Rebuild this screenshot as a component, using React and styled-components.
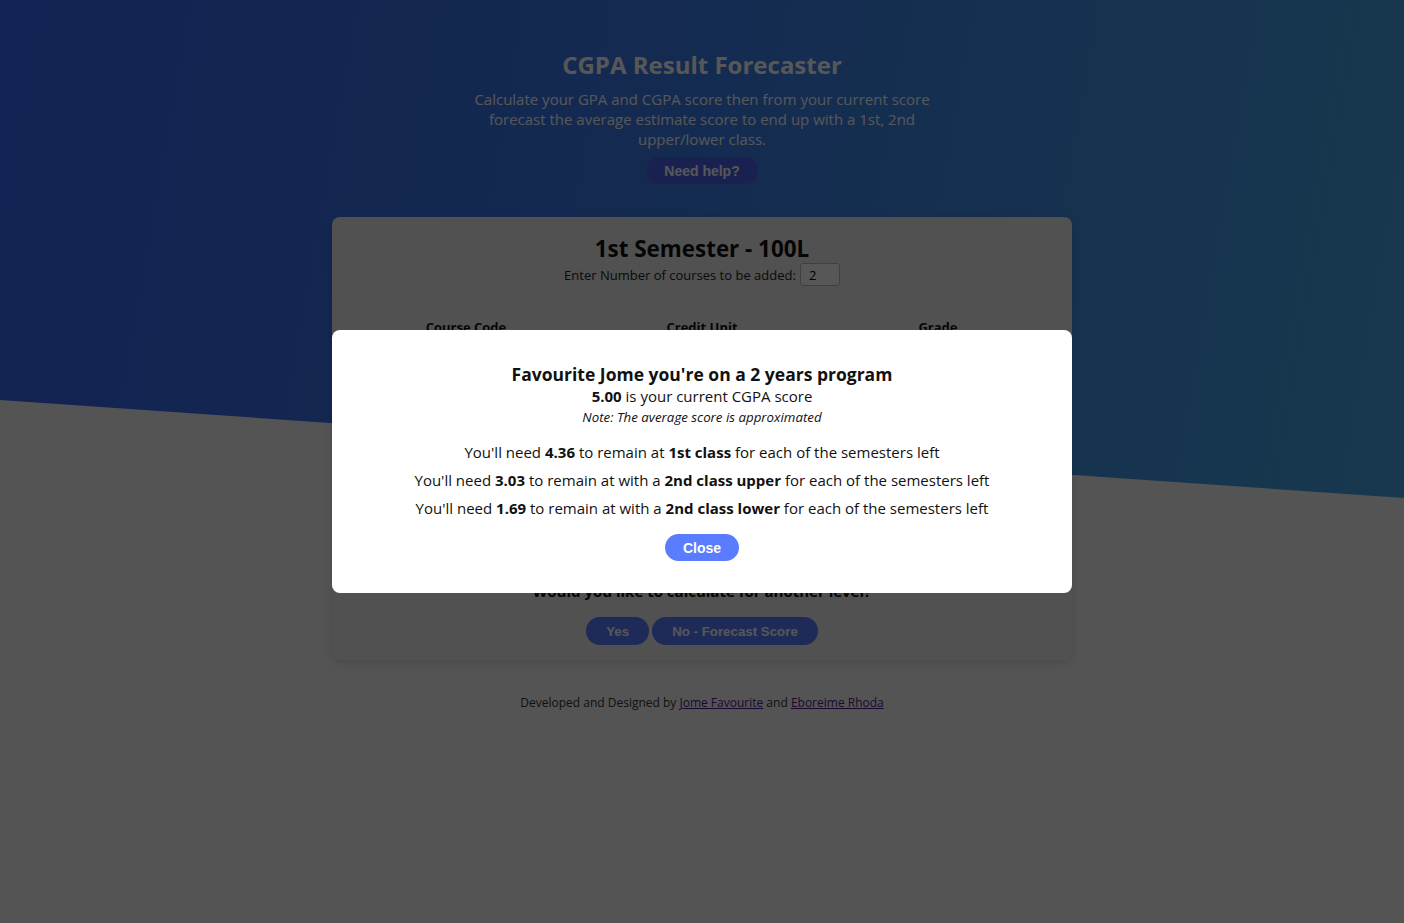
import React from "react";
import styled, { createGlobalStyle } from "styled-components";

const GlobalStyle = createGlobalStyle`
  html, body { margin: 0; padding: 0; }
  body {
    font-family: "Open Sans", "DejaVu Sans", sans-serif;
    background: #f6f6f6;
    color: #222;
  }
  * { box-sizing: border-box; }
`;

const Page = styled.div`
  position: relative;
  min-height: 100vh;
  background: #f6f6f6;
  overflow: hidden;
  &::before {
    content: "";
    position: absolute;
    left: 0;
    right: 0;
    top: 0;
    height: 498px;
    background: linear-gradient(100deg, #3764f0 0%, #3c80ec 50%, #44a6e4 100%);
    clip-path: polygon(0 0, 100% 0, 100% 498px, 0 400px);
    z-index: 0;
  }
`;

const Content = styled.div`
  position: relative;
  z-index: 1;
  display: flex;
  flex-direction: column;
  align-items: center;
  padding-top: 49px;
`;

const Title = styled.h1`
  margin: 0;
  font-size: 24px;
  line-height: 32px;
  font-weight: 700;
  color: #ffffff;
`;

const Lead = styled.p`
  margin: 8px 0 0;
  width: 470px;
  text-align: center;
  font-size: 15px;
  line-height: 20px;
  color: #ffffff;
`;

const PillButton = styled.button`
  border: none;
  border-radius: 14px;
  height: ${(p) => p.$h || 28}px;
  padding: 0 ${(p) => p.$px || 19}px;
  background: ${(p) => p.$bg || "#5a7cff"};
  color: #ffffff;
  font-family: "Liberation Sans", Arial, sans-serif;
  font-weight: 700;
  font-size: ${(p) => p.$fs || 14}px;
  cursor: pointer;
`;

const HelpButton = styled(PillButton)`
  margin-top: 8px;
`;

const Card = styled.section`
  margin-top: 33px;
  width: 740px;
  background: #ececec;
  border-radius: 8px;
  box-shadow: 0 3px 10px rgba(0, 0, 0, 0.12);
  padding: 16px 16px 15px;
  display: flex;
  flex-direction: column;
  align-items: center;
`;

const CardTitle = styled.h2`
  margin: 0;
  font-size: 22.4px;
  line-height: 31px;
  font-weight: 700;
  color: #111;
`;

const CountRow = styled.label`
  display: flex;
  align-items: center;
  gap: 4px;
  font-size: 13px;
  color: #222;
  height: 23px;
  margin-top: -1px;
`;

const CountInput = styled.input`
  width: 40px;
  height: 23px;
  border: 1px solid #bdbdbd;
  border-radius: 3px;
  padding: 0 8px;
  font-family: inherit;
  font-size: 13px;
  background: #fff;
`;

const Grid = styled.div`
  margin-top: 32px;
  width: 100%;
  display: grid;
  grid-template-columns: repeat(3, 1fr);
  row-gap: 12px;
  justify-items: center;
`;

const ColHead = styled.div`
  font-size: 13px;
  line-height: 18px;
  font-weight: 700;
  color: #111;
`;

const Field = styled.input`
  width: 180px;
  height: 30px;
  border: 1px solid #ccc;
  border-radius: 4px;
  background: #fff;
  font-family: inherit;
  font-size: 13px;
  padding: 0 8px;
`;

const Field2 = styled.select`
  width: 180px;
  height: 30px;
  border: 1px solid #ccc;
  border-radius: 4px;
  background: #fff;
  font-family: inherit;
  font-size: 13px;
`;

const Result = styled.div`
  margin-top: 24px;
  display: flex;
  flex-direction: column;
  align-items: center;
  gap: 10px;
  font-size: 15px;
  height: 136px;
`;

const Question = styled.h3`
  margin: 0;
  font-size: 15px;
  line-height: 22px;
  font-weight: 700;
  color: #111;
`;

const ButtonRow = styled.div`
  margin-top: 15px;
  display: flex;
  gap: 3px;
`;

const Footer = styled.footer`
  margin-top: 34px;
  font-size: 12px;
  line-height: 18px;
  color: #333;
`;

const Link = styled.a`
  color: #551a8b;
  text-decoration: underline;
`;

const Overlay = styled.div`
  position: fixed;
  inset: 0;
  z-index: 10;
  background: rgba(0, 0, 0, 0.66);
  display: flex;
  align-items: center;
  justify-content: center;
`;

const Modal = styled.div`
  width: 740px;
  background: #fff;
  border-radius: 8px;
  padding: 32px 20px 32px;
  display: flex;
  flex-direction: column;
  align-items: center;
  text-align: center;
  color: #111;
`;

const ModalTitle = styled.h3`
  margin: 0;
  font-size: 17.5px;
  line-height: 24px;
  font-weight: 700;
`;

const Line = styled.p`
  margin: ${(p) => p.$mt || 0}px 0 0;
  font-size: ${(p) => p.$fs || 15}px;
  line-height: ${(p) => p.$lh || 20}px;
  font-style: ${(p) => (p.$italic ? "italic" : "normal")};
`;

const CloseButton = styled(PillButton)`
  margin-top: 16px;
`;

const needs = [
  { v: "4.36", pre: "to remain at", cls: "1st class" },
  { v: "3.03", pre: "to remain at with a", cls: "2nd class upper" },
  { v: "1.69", pre: "to remain at with a", cls: "2nd class lower" },
];

export default function App() {
  return (
    <>
      <GlobalStyle />
      <Page>
        <Content>
          <Title>CGPA Result Forecaster</Title>
          <Lead>
            Calculate your GPA and CGPA score then from your current score forecast the average
            estimate score to end up with a 1st, 2nd upper/lower class.
          </Lead>
          <HelpButton $bg="#4b61ea" $h={27} $px={18.5}>Need help?</HelpButton>

          <Card>
            <CardTitle>1st Semester - 100L</CardTitle>
            <CountRow>
              Enter Number of courses to be added:
              <CountInput defaultValue="2" />
            </CountRow>
            <Grid>
              <ColHead>Course Code</ColHead>
              <ColHead>Credit Unit</ColHead>
              <ColHead>Grade</ColHead>
              <Field defaultValue="GST 101" />
              <Field2 defaultValue="3"><option>3</option></Field2>
              <Field2 defaultValue="A"><option>A</option></Field2>
              <Field defaultValue="MTH 101" />
              <Field2 defaultValue="3"><option>3</option></Field2>
              <Field2 defaultValue="A"><option>A</option></Field2>
            </Grid>
            <Result>
              <div>Your GPA is <b>5.00</b></div>
              <div>Your CGPA is <b>5.00</b></div>
            </Result>
            <Question>Would you like to calculate for another level?</Question>
            <ButtonRow>
              <PillButton $bg="#5a7cff" $fs={13.3} $px={20}>Yes</PillButton>
              <PillButton $bg="#5a7cff" $fs={13.3} $px={20}>No - Forecast Score</PillButton>
            </ButtonRow>
          </Card>

          <Footer>
            Developed and Designed by <Link href="#">Jome Favourite</Link> and{" "}
            <Link href="#">Eboreime Rhoda</Link>
          </Footer>
        </Content>

        <Overlay>
          <Modal>
            <ModalTitle>Favourite Jome you're on a 2 years program</ModalTitle>
            <Line><b>5.00</b> is your current CGPA score</Line>
            <Line $fs={13.3} $lh={22} $italic>Note: The average score is approximated</Line>
            {needs.map((n, i) => (
              <Line key={n.v} $mt={i === 0 ? 14 : 8}>
                You'll need <b>{n.v}</b> {n.pre} <b>{n.cls}</b> for each of the semesters left
              </Line>
            ))}
            <CloseButton $h={27} $px={18}>Close</CloseButton>
          </Modal>
        </Overlay>
      </Page>
    </>
  );
}
